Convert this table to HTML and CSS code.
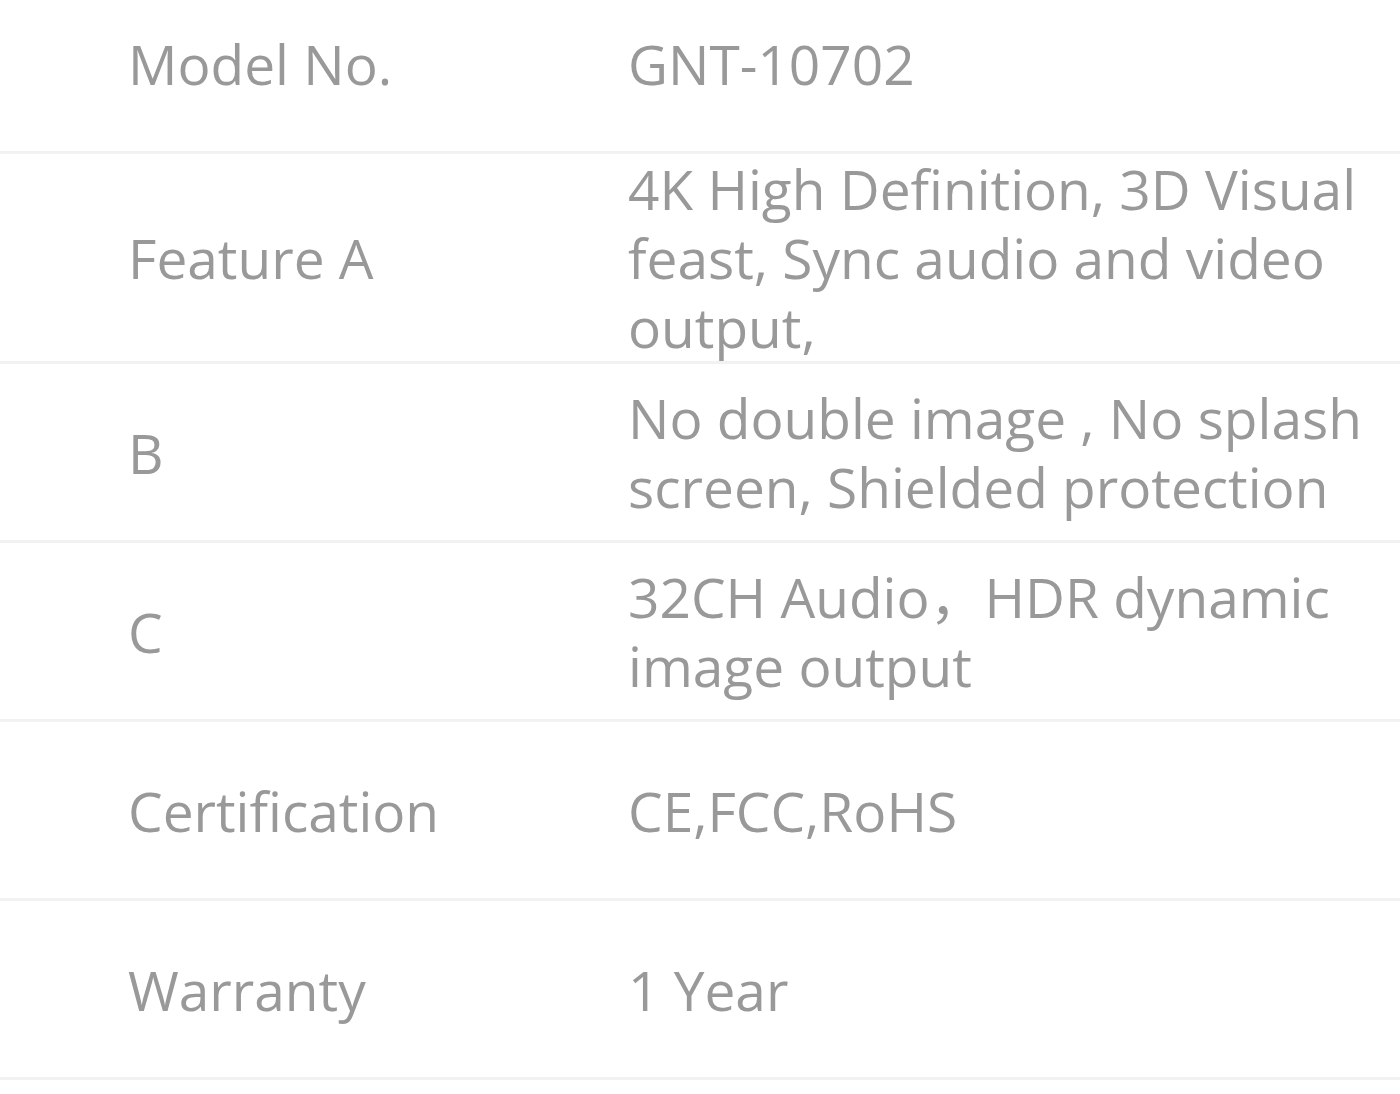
FILE: index.html
```html
<!DOCTYPE html>
<html>
<head>
<meta charset="utf-8">
<link rel="stylesheet" href="styles.css">
</head>
<body>
<div class="spec">
  <div class="row"><div class="label">Model No.</div><div class="value">GNT-10702</div></div>
  <div class="row"><div class="label">Feature A</div><div class="value">4K High Definition, 3D Visual feast, Sync audio and video output,</div></div>
  <div class="row"><div class="label">B</div><div class="value">No double image , No splash screen, Shielded protection</div></div>
  <div class="row"><div class="label">C</div><div class="value">32CH Audio，HDR dynamic image output</div></div>
  <div class="row"><div class="label">Certification</div><div class="value">CE,FCC,RoHS</div></div>
  <div class="row"><div class="label">Warranty</div><div class="value">1 Year</div></div>
</div>
</body>
</html>
```

FILE: styles.css
```css
html, body {
  margin: 0;
  padding: 0;
  background: #ffffff;
}
body {
  font-family: "Open Sans", "Noto Sans CJK SC", sans-serif;
  font-size: 55px;
  line-height: 69px;
  color: #999999;
  overflow: hidden;
}
.spec {
  margin-top: -25px;
}
.row {
  display: grid;
  grid-template-columns: 628px 1fr;
  align-items: center;
  min-height: 176px;
  border-bottom: 3px solid #f2f2f2;
}
.label {
  padding-left: 128px;
}
.value {
  padding-right: 20px;
}
```
